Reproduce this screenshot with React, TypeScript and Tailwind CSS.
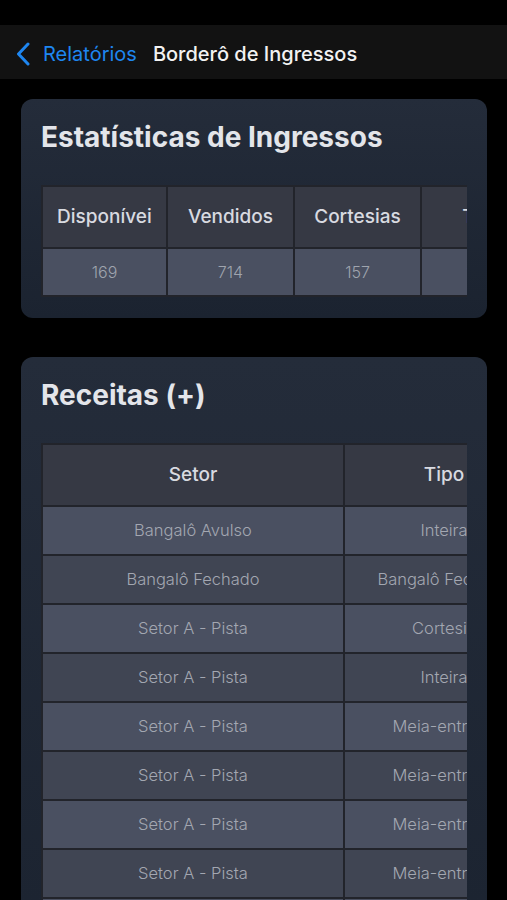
import React from 'react';

const stats = [
  { label: 'Disponíveis', value: '169', w: 'w-[125px]' },
  { label: 'Vendidos', value: '714', w: 'w-[127px]' },
  { label: 'Cortesias', value: '157', w: 'w-[127px]' },
  { label: 'Total', value: '1040', w: 'w-[127px]' },
];

const receitas = [
  { setor: 'Bangalô Avulso', tipo: 'Inteira' },
  { setor: 'Bangalô Fechado', tipo: 'Bangalô Fechado' },
  { setor: 'Setor A - Pista', tipo: 'Cortesia' },
  { setor: 'Setor A - Pista', tipo: 'Inteira' },
  { setor: 'Setor A - Pista', tipo: 'Meia-entrada' },
  { setor: 'Setor A - Pista', tipo: 'Meia-entrada' },
  { setor: 'Setor A - Pista', tipo: 'Meia-entrada' },
  { setor: 'Setor A - Pista', tipo: 'Meia-entrada' },
  { setor: 'Setor A - Pista', tipo: 'Meia-entrada' },
];

function Card({ title, children }: { title: string; children: React.ReactNode }) {
  return (
    <div className="rounded-xl bg-gradient-to-b from-[#242c3a] to-[#1b2330] px-5 pt-[21px] pb-[21px]">
      <h2 className="text-[28px] leading-[34px] font-bold text-[#e3e5ea]">{title}</h2>
      <div className="mt-[31px] overflow-hidden">{children}</div>
    </div>
  );
}

export default function App() {
  return (
    <div
      className="min-h-[900px] bg-black overflow-hidden"
      style={{ fontFamily: 'Inter, "Noto Sans", sans-serif' }}
    >
      <div className="h-[25px] bg-black" />
      <div className="h-[54px] bg-[#121212] flex items-center px-4 pt-[3px]">
        <svg width="14" height="24" viewBox="0 0 14 24" className="shrink-0">
          <path
            d="M12 2 L2.5 12 L12 22"
            fill="none"
            stroke="#1e86f0"
            strokeWidth="3"
            strokeLinecap="round"
            strokeLinejoin="round"
          />
        </svg>
        <span className="ml-[13px] text-[20px] text-[#1e86f0]">Relatórios</span>
        <span className="ml-4 text-[20px] font-medium text-[#f2f2f2]">Borderô de Ingressos</span>
      </div>

      <div className="pl-[21px] pr-[20px] pt-5 flex flex-col gap-[39px]">
        <Card title="Estatísticas de Ingressos">
          <table className="border-collapse border-2 border-[#22242b] table-fixed w-[508px] max-w-none">
            <thead>
              <tr className="h-[62px] bg-[#363944]">
                {stats.map((s) => (
                  <th key={s.label} className={`${s.w} border-2 border-[#22242b] px-[14px] font-medium text-[19px] text-[#d8dae0]`}>
                    <div className="overflow-hidden whitespace-nowrap text-center">{s.label}</div>
                  </th>
                ))}
              </tr>
            </thead>
            <tbody>
              <tr className="h-[48px] bg-[#4a5061]">
                {stats.map((s) => (
                  <td key={s.label} className="border-2 border-[#22242b] text-center text-[16px] font-light text-[#9fa4ae]">
                    {s.value}
                  </td>
                ))}
              </tr>
            </tbody>
          </table>
        </Card>

        <Card title="Receitas (+)">
          <table className="border-collapse border-2 border-[#22242b] table-fixed w-[504px] max-w-none">
            <thead>
              <tr className="h-[62px] bg-[#363944]">
                <th className="w-[302px] border-2 border-[#22242b] font-medium text-[19px] text-[#d8dae0]">Setor</th>
                <th className="w-[200px] border-2 border-[#22242b] font-medium text-[19px] text-[#d8dae0]">Tipo</th>
              </tr>
            </thead>
            <tbody>
              {receitas.map((r, i) => (
                <tr key={i} className={`h-[49px] ${i % 2 === 0 ? 'bg-[#4a5061]' : 'bg-[#404553]'}`}>
                  <td className="border-2 border-[#22242b] text-center text-[16.5px] font-light text-[#a3a7b1] whitespace-nowrap">
                    {r.setor}
                  </td>
                  <td className="border-2 border-[#22242b] text-center text-[16.5px] font-light text-[#a3a7b1] whitespace-nowrap overflow-hidden">
                    {r.tipo}
                  </td>
                </tr>
              ))}
            </tbody>
          </table>
        </Card>
      </div>
    </div>
  );
}
